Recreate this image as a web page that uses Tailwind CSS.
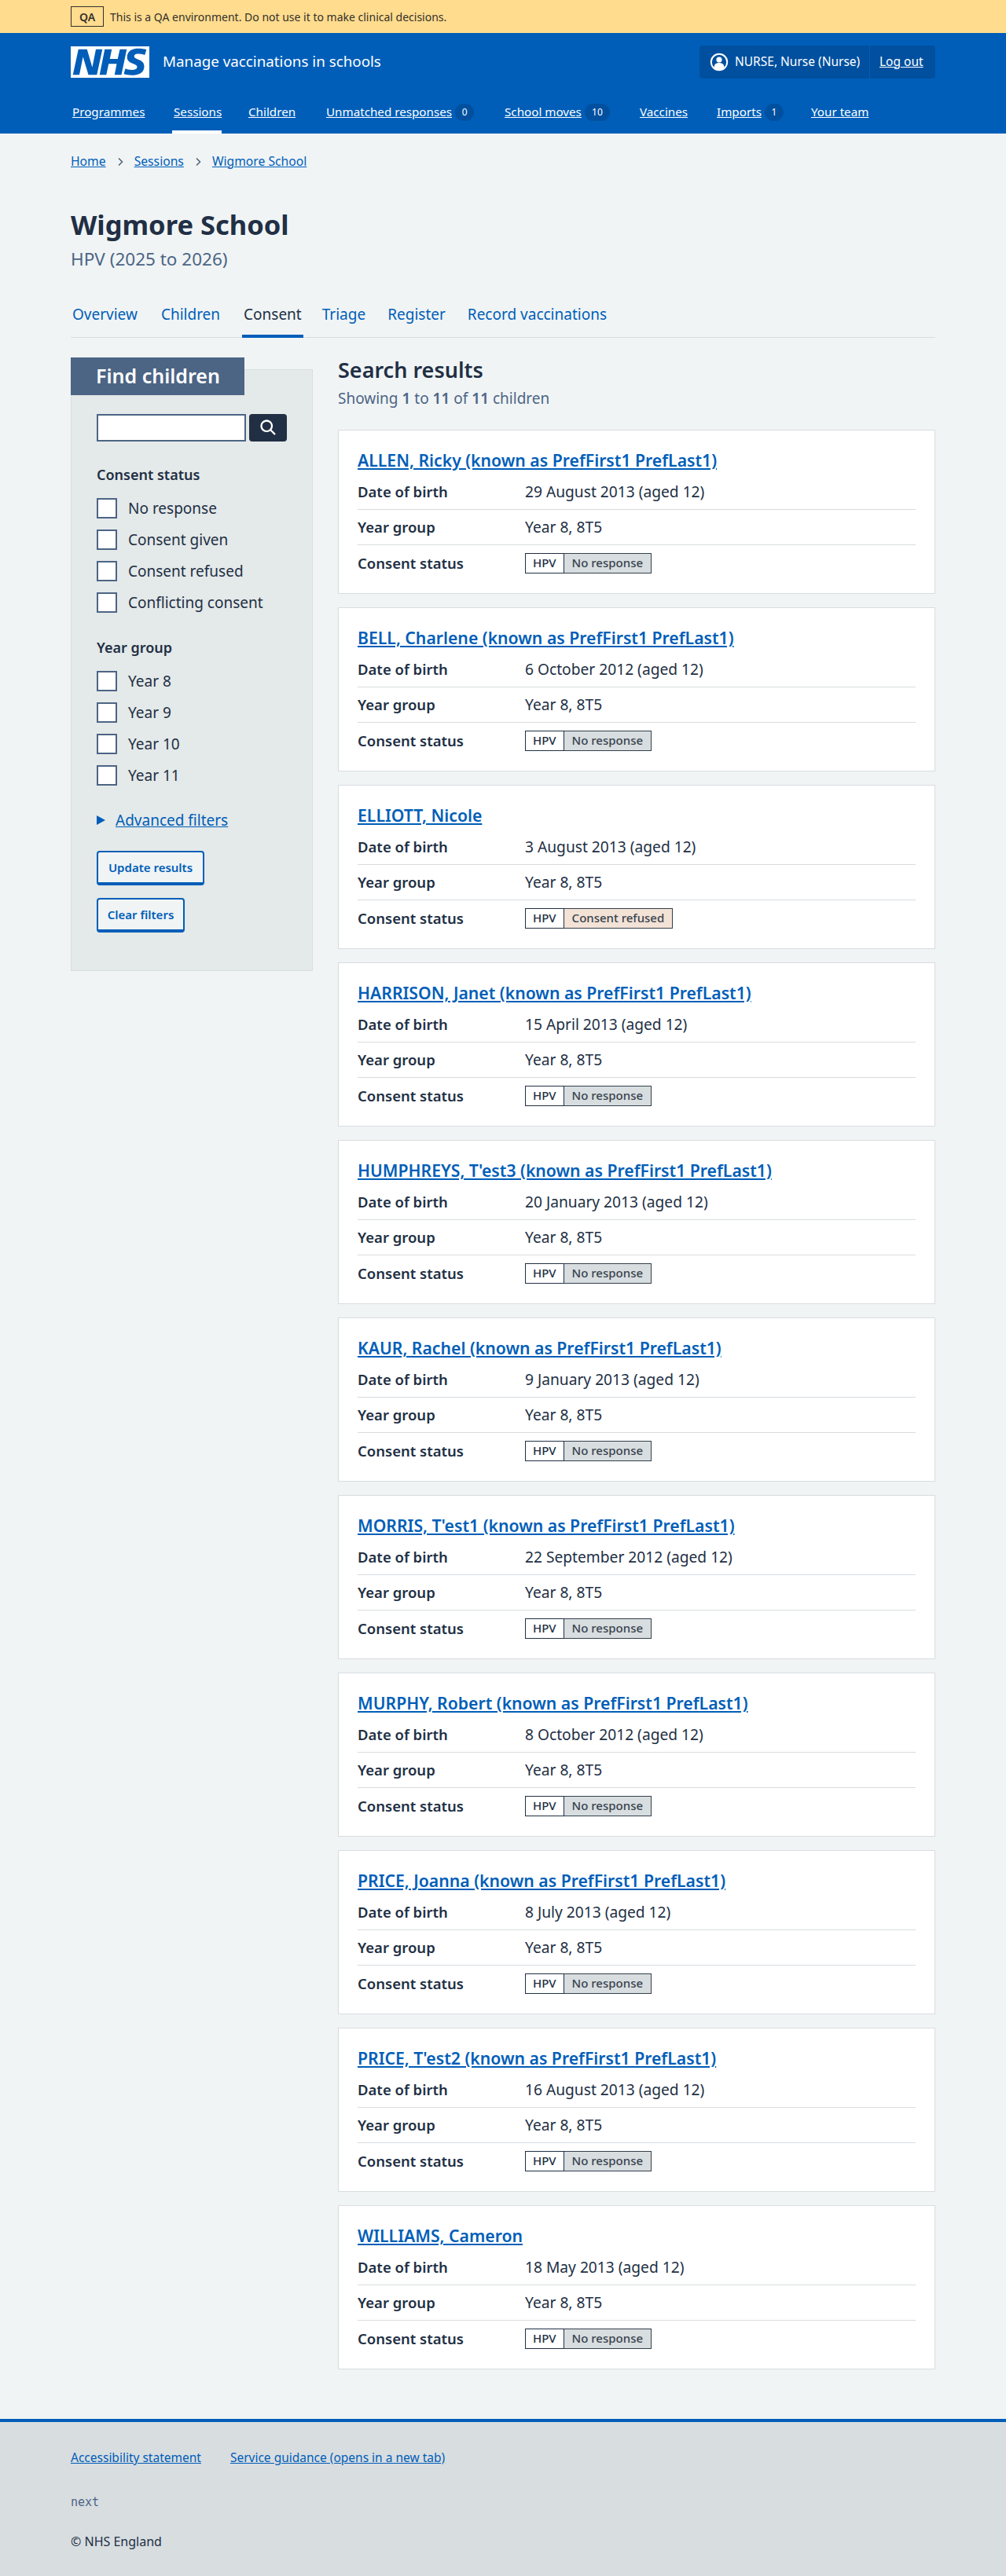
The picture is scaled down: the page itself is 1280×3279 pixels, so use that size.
<!DOCTYPE html>
<html lang="en">
	<head>
		<meta charset="UTF-8" />
		<meta name="viewport" content="width=device-width, initial-scale=1.0" />
		<script src="https://cdn.jsdelivr.net/npm/@tailwindcss/browser@4"></script>
		<title>Wigmore School – Consent</title>
	</head>
	<body class="bg-[#f0f4f5] text-[#212f44] font-['Noto_Sans',sans-serif] text-[16px] w-full">
		<!-- QA banner -->
		<div class="bg-[#ffdc8e] h-[42px] px-[90px] flex items-center gap-2 text-[14px] text-[#33302a]">
			<strong class="border border-[#33302a] h-[26px] w-[42px] flex items-center justify-center font-semibold">QA</strong>
			<span>This is a QA environment. Do not use it to make clinical decisions.</span>
		</div>

		<header class="bg-[#005eb8] h-[128px] text-white">
			<div class="px-[90px] flex items-center justify-between h-[70px] pt-[16px] pb-[13px]">
				<div class="flex items-center gap-[17px]">
					<svg class="w-[100px] h-[40px]" viewBox="0 0 40 16" preserveAspectRatio="none">
						<path fill="#fff" d="M0 0h40v16H0z" />
						<path fill="#005eb8" d="M3.9 1.5h4.4l2.6 9h.1l1.8-9h3.3l-2.8 13H9l-2.7-9h-.1l-1.8 9H1.1M17.3 1.5h3.6l-1 4.9h4L25 1.5h3.5l-2.7 13h-3.5l1.1-5.6h-4.1l-1.2 5.6h-3.4M37.7 4.4c-.7-.3-1.6-.6-2.9-.6-1.4 0-2.5.2-2.5 1.3 0 1.8 5.1 1.2 5.1 5.1 0 3.6-3.3 4.5-6.4 4.5-1.3 0-2.9-.3-4-.7l.8-2.7c.7.4 2.1.7 3.2.7s2.8-.2 2.8-1.5c0-2.1-5.1-1.3-5.1-5 0-3.4 2.9-4.4 5.8-4.4 1.6 0 3.1.2 4 .6" />
					</svg>
					<span class="text-[18.8px]">Manage vaccinations in schools</span>
				</div>
				<div class="bg-[#00509f] rounded h-[42px] w-[300px] flex items-center text-[15.500px]">
					<svg class="w-[24px] h-[24px] ml-[13px] mr-[8px]" viewBox="0 0 24 24">
						<circle cx="12" cy="12" r="10.2" fill="none" stroke="#fff" stroke-width="2" />
						<circle cx="12" cy="9" r="3.6" fill="#fff" />
						<path fill="#fff" d="M5.5 19c0-4 2.5-6 6.5-6s6.5 2 6.5 6c-1.5 2-4 3-6.500 3s-5-1-6.500-3z" />
					</svg>
					<span class="w-[171px]">NURSE, Nurse (Nurse)</span>
					<a href="#" class="border-l border-[#005eb8] h-full flex items-center pl-[12px] underline">Log out</a>
				</div>
			</div>
			<nav class="px-[90px] h-[58px] flex items-stretch text-[15.200px]">
				<a href="#" class="ml-[2px] w-[129px] pt-[19px] underline">Programmes</a>
				<a href="#" class="w-[63px] pt-[19px] pl-[2px] -ml-[2px] mr-[34px] underline border-b-4 border-white">Sessions</a>
				<a href="#" class="w-[99px] pt-[19px] underline">Children</a>
				<span class="w-[227px] pt-[19px]"><a href="#" class="underline">Unmatched responses</a><span class="inline-flex items-center justify-center w-[24px] h-[22px] rounded-full bg-[#00509f] text-[12px] ml-[4px] align-[1px]">0</span></span>
				<span class="w-[172px] pt-[19px]"><a href="#" class="underline">School moves</a><span class="inline-flex items-center justify-center w-[32px] h-[22px] rounded-full bg-[#00509f] text-[12px] ml-[4px] align-[1px]">10</span></span>
				<a href="#" class="w-[98px] pt-[19px] underline">Vaccines</a>
				<span class="w-[120px] pt-[19px]"><a href="#" class="underline">Imports</a><span class="inline-flex items-center justify-center w-[24px] h-[22px] rounded-full bg-[#00509f] text-[12px] ml-[4px] align-[1px]">1</span></span>
				<a href="#" class="pt-[19px] underline">Your team</a>
			</nav>
		</header>

		<main class="px-[90px]">
			<!-- Breadcrumb -->
			<div class="flex items-center h-[72px] text-[15.700px] text-[#005eb8] pb-[1px]">
				<a href="#" class="underline">Home</a>
				<svg class="w-[10px] h-[12px] mx-[13px] text-[#4c6272]" viewBox="0 0 10 12"><path d="M3 1.500 7.500 6 3 10.500" fill="none" stroke="currentColor" stroke-width="1.500" /></svg>
				<a href="#" class="underline">Sessions</a>
				<svg class="w-[10px] h-[12px] mx-[13px] text-[#4c6272]" viewBox="0 0 10 12"><path d="M3 1.500 7.500 6 3 10.500" fill="none" stroke="currentColor" stroke-width="1.500" /></svg>
				<a href="#" class="underline">Wigmore School</a>
			</div>

			<h1 class="text-[34.500px] leading-[44px] font-bold mt-[22px]">Wigmore School</h1>
			<p class="text-[22.500px] leading-[30px] text-[#4c6585] mt-[7px]">HPV (2025 to 2026)</p>

			<!-- Tabs -->
			<nav class="flex items-stretch h-[58px] mt-[27px] border-b border-[#d8dde0] text-[19px] text-[#005eb8]">
				<a href="#" class="px-[2px] mr-[26px] pt-[14px]">Overview</a>
				<a href="#" class="px-[2px] mr-[26px] pt-[14px]">Children</a>
				<span class="px-[2px] mr-[22px] pt-[14px] text-[#212f44] border-b-4 border-[#005eb8] -mb-px">Consent</span>
				<a href="#" class="px-[2px] mr-[24px] pt-[14px]">Triage</a>
				<a href="#" class="px-[2px] mr-[24px] pt-[14px]">Register</a>
				<a href="#" class="px-[2px] pt-[14px]">Record vaccinations</a>
			</nav>

			<div class="flex items-start gap-[32px] mt-[25px] pb-[63px]">
				<!-- Filters -->
				<aside class="w-[308px] shrink-0 relative pt-[15px]">
					<h2 class="absolute top-0 left-0 w-[221px] h-[48px] bg-[#4c6585] text-white text-[25px] font-semibold pl-[32px] flex items-center">Find children</h2>
					<form class="bg-[#e4e9e9] border border-[#d8dde0] h-[766px] pl-[32px] pt-[56px]">
						<div class="flex gap-[4px]">
							<input type="text" class="w-[190px] h-[35px] bg-white border-2 border-[#4c6585]" />
							<button type="button" class="w-[48px] h-[35px] bg-[#212f44] rounded flex items-center justify-center">
								<svg class="w-[27px] h-[27px]" viewBox="0 0 24 24"><path fill="#fff" d="M19.71 18.29l-4.11-4.1a7 7 0 1 0-1.41 1.41l4.1 4.11a1 1 0 0 0 1.42 0 1 1 0 0 0 0-1.42zM5 10a5 5 0 1 1 5 5 5 5 0 0 1-5-5z" /></svg>
							</button>
						</div>

						<h3 class="font-semibold text-[18px] leading-[24px] mt-[30px]">Consent status</h3>
						<div class="flex flex-col gap-[14px] mt-[18px] text-[19px] leading-[26px]">
							<label class="flex items-center gap-[14px]"><span class="w-[26px] h-[26px] bg-white border-2 border-[#4c6585]"></span>No response</label>
							<label class="flex items-center gap-[14px]"><span class="w-[26px] h-[26px] bg-white border-2 border-[#4c6585]"></span>Consent given</label>
							<label class="flex items-center gap-[14px]"><span class="w-[26px] h-[26px] bg-white border-2 border-[#4c6585]"></span>Consent refused</label>
							<label class="flex items-center gap-[14px]"><span class="w-[26px] h-[26px] bg-white border-2 border-[#4c6585]"></span>Conflicting consent</label>
						</div>

						<h3 class="font-semibold text-[18px] leading-[24px] mt-[32px]">Year group</h3>
						<div class="flex flex-col gap-[14px] mt-[18px] text-[19px] leading-[26px]">
							<label class="flex items-center gap-[14px]"><span class="w-[26px] h-[26px] bg-white border-2 border-[#4c6585]"></span>Year 8</label>
							<label class="flex items-center gap-[14px]"><span class="w-[26px] h-[26px] bg-white border-2 border-[#4c6585]"></span>Year 9</label>
							<label class="flex items-center gap-[14px]"><span class="w-[26px] h-[26px] bg-white border-2 border-[#4c6585]"></span>Year 10</label>
							<label class="flex items-center gap-[14px]"><span class="w-[26px] h-[26px] bg-white border-2 border-[#4c6585]"></span>Year 11</label>
						</div>

						<div class="flex items-center gap-[13px] mt-[32px] text-[19px] leading-[24px] text-[#005eb8]">
							<svg class="w-[11px] h-[12px]" viewBox="0 0 11 12"><path d="M0 0 11 6 0 12z" fill="#005eb8" /></svg>
							<a href="#" class="underline">Advanced filters</a>
						</div>

						<button type="button" class="block w-[137px] h-[44px] mt-[27px] rounded bg-[#f0f4f5] border-2 border-b-4 border-[#005eb8] text-[#005eb8] text-[15px] font-semibold">Update results</button>
						<button type="button" class="block w-[112px] h-[44px] mt-[16px] rounded bg-[#f0f4f5] border-2 border-b-4 border-[#005eb8] text-[#005eb8] text-[15px] font-semibold">Clear filters</button>
					</form>
				</aside>

				<!-- Results -->
				<section class="flex-1">
					<h2 class="text-[27px] leading-[32px] font-semibold">Search results</h2>
					<p class="text-[19px] leading-[28px] text-[#4c6585] mt-[6px]">Showing <b class="font-semibold">1</b> to <b class="font-semibold">11</b> of <b class="font-semibold">11</b> children</p>

					<div class="flex flex-col gap-[17px] mt-[26px]">
						<article class="bg-white border border-[#d8dde0] h-[209px] px-[24px] pt-[23px]">
							<h3 class="text-[21.200px] leading-[30px] font-semibold"><a href="#" class="text-[#005eb8] underline">ALLEN, Ricky (known as PrefFirst1 PrefLast1)</a></h3>
							<dl class="text-[19.200px] mt-[3px]">
								<div class="flex h-[45px] items-center border-b border-[#d8dde0]"><dt class="w-[213px] text-[18.500px] font-semibold">Date of birth</dt><dd>29 August 2013 (aged 12)</dd></div>
								<div class="flex h-[45px] items-center border-b border-[#d8dde0]"><dt class="w-[213px] text-[18.500px] font-semibold">Year group</dt><dd>Year 8, 8T5</dd></div>
								<div class="flex h-[45px] items-center"><dt class="w-[213px] text-[18.500px] font-semibold">Consent status</dt><dd class="flex h-[26px] text-[15px] font-medium"><span class="border border-[#212f44] px-[9px] flex items-center">HPV</span><span class="border border-l-0 border-[#33404b] bg-[#d8dde0] text-[#37434d] px-[10px] flex items-center">No response</span></dd></div>
							</dl>
						</article>
						<article class="bg-white border border-[#d8dde0] h-[209px] px-[24px] pt-[23px]">
							<h3 class="text-[21.200px] leading-[30px] font-semibold"><a href="#" class="text-[#005eb8] underline">BELL, Charlene (known as PrefFirst1 PrefLast1)</a></h3>
							<dl class="text-[19.200px] mt-[3px]">
								<div class="flex h-[45px] items-center border-b border-[#d8dde0]"><dt class="w-[213px] text-[18.500px] font-semibold">Date of birth</dt><dd>6 October 2012 (aged 12)</dd></div>
								<div class="flex h-[45px] items-center border-b border-[#d8dde0]"><dt class="w-[213px] text-[18.500px] font-semibold">Year group</dt><dd>Year 8, 8T5</dd></div>
								<div class="flex h-[45px] items-center"><dt class="w-[213px] text-[18.500px] font-semibold">Consent status</dt><dd class="flex h-[26px] text-[15px] font-medium"><span class="border border-[#212f44] px-[9px] flex items-center">HPV</span><span class="border border-l-0 border-[#33404b] bg-[#d8dde0] text-[#37434d] px-[10px] flex items-center">No response</span></dd></div>
							</dl>
						</article>
						<article class="bg-white border border-[#d8dde0] h-[209px] px-[24px] pt-[23px]">
							<h3 class="text-[21.200px] leading-[30px] font-semibold"><a href="#" class="text-[#005eb8] underline">ELLIOTT, Nicole</a></h3>
							<dl class="text-[19.200px] mt-[3px]">
								<div class="flex h-[45px] items-center border-b border-[#d8dde0]"><dt class="w-[213px] text-[18.500px] font-semibold">Date of birth</dt><dd>3 August 2013 (aged 12)</dd></div>
								<div class="flex h-[45px] items-center border-b border-[#d8dde0]"><dt class="w-[213px] text-[18.500px] font-semibold">Year group</dt><dd>Year 8, 8T5</dd></div>
								<div class="flex h-[45px] items-center"><dt class="w-[213px] text-[18.500px] font-semibold">Consent status</dt><dd class="flex h-[26px] text-[15px] font-medium"><span class="border border-[#212f44] px-[9px] flex items-center">HPV</span><span class="border border-l-0 border-[#33404b] bg-[#f3e2d6] text-[#37434d] px-[10px] flex items-center">Consent refused</span></dd></div>
							</dl>
						</article>
						<article class="bg-white border border-[#d8dde0] h-[209px] px-[24px] pt-[23px]">
							<h3 class="text-[21.200px] leading-[30px] font-semibold"><a href="#" class="text-[#005eb8] underline">HARRISON, Janet (known as PrefFirst1 PrefLast1)</a></h3>
							<dl class="text-[19.200px] mt-[3px]">
								<div class="flex h-[45px] items-center border-b border-[#d8dde0]"><dt class="w-[213px] text-[18.500px] font-semibold">Date of birth</dt><dd>15 April 2013 (aged 12)</dd></div>
								<div class="flex h-[45px] items-center border-b border-[#d8dde0]"><dt class="w-[213px] text-[18.500px] font-semibold">Year group</dt><dd>Year 8, 8T5</dd></div>
								<div class="flex h-[45px] items-center"><dt class="w-[213px] text-[18.500px] font-semibold">Consent status</dt><dd class="flex h-[26px] text-[15px] font-medium"><span class="border border-[#212f44] px-[9px] flex items-center">HPV</span><span class="border border-l-0 border-[#33404b] bg-[#d8dde0] text-[#37434d] px-[10px] flex items-center">No response</span></dd></div>
							</dl>
						</article>
						<article class="bg-white border border-[#d8dde0] h-[209px] px-[24px] pt-[23px]">
							<h3 class="text-[21.200px] leading-[30px] font-semibold"><a href="#" class="text-[#005eb8] underline">HUMPHREYS, T'est3 (known as PrefFirst1 PrefLast1)</a></h3>
							<dl class="text-[19.200px] mt-[3px]">
								<div class="flex h-[45px] items-center border-b border-[#d8dde0]"><dt class="w-[213px] text-[18.500px] font-semibold">Date of birth</dt><dd>20 January 2013 (aged 12)</dd></div>
								<div class="flex h-[45px] items-center border-b border-[#d8dde0]"><dt class="w-[213px] text-[18.500px] font-semibold">Year group</dt><dd>Year 8, 8T5</dd></div>
								<div class="flex h-[45px] items-center"><dt class="w-[213px] text-[18.500px] font-semibold">Consent status</dt><dd class="flex h-[26px] text-[15px] font-medium"><span class="border border-[#212f44] px-[9px] flex items-center">HPV</span><span class="border border-l-0 border-[#33404b] bg-[#d8dde0] text-[#37434d] px-[10px] flex items-center">No response</span></dd></div>
							</dl>
						</article>
						<article class="bg-white border border-[#d8dde0] h-[209px] px-[24px] pt-[23px]">
							<h3 class="text-[21.200px] leading-[30px] font-semibold"><a href="#" class="text-[#005eb8] underline">KAUR, Rachel (known as PrefFirst1 PrefLast1)</a></h3>
							<dl class="text-[19.200px] mt-[3px]">
								<div class="flex h-[45px] items-center border-b border-[#d8dde0]"><dt class="w-[213px] text-[18.500px] font-semibold">Date of birth</dt><dd>9 January 2013 (aged 12)</dd></div>
								<div class="flex h-[45px] items-center border-b border-[#d8dde0]"><dt class="w-[213px] text-[18.500px] font-semibold">Year group</dt><dd>Year 8, 8T5</dd></div>
								<div class="flex h-[45px] items-center"><dt class="w-[213px] text-[18.500px] font-semibold">Consent status</dt><dd class="flex h-[26px] text-[15px] font-medium"><span class="border border-[#212f44] px-[9px] flex items-center">HPV</span><span class="border border-l-0 border-[#33404b] bg-[#d8dde0] text-[#37434d] px-[10px] flex items-center">No response</span></dd></div>
							</dl>
						</article>
						<article class="bg-white border border-[#d8dde0] h-[209px] px-[24px] pt-[23px]">
							<h3 class="text-[21.200px] leading-[30px] font-semibold"><a href="#" class="text-[#005eb8] underline">MORRIS, T'est1 (known as PrefFirst1 PrefLast1)</a></h3>
							<dl class="text-[19.200px] mt-[3px]">
								<div class="flex h-[45px] items-center border-b border-[#d8dde0]"><dt class="w-[213px] text-[18.500px] font-semibold">Date of birth</dt><dd>22 September 2012 (aged 12)</dd></div>
								<div class="flex h-[45px] items-center border-b border-[#d8dde0]"><dt class="w-[213px] text-[18.500px] font-semibold">Year group</dt><dd>Year 8, 8T5</dd></div>
								<div class="flex h-[45px] items-center"><dt class="w-[213px] text-[18.500px] font-semibold">Consent status</dt><dd class="flex h-[26px] text-[15px] font-medium"><span class="border border-[#212f44] px-[9px] flex items-center">HPV</span><span class="border border-l-0 border-[#33404b] bg-[#d8dde0] text-[#37434d] px-[10px] flex items-center">No response</span></dd></div>
							</dl>
						</article>
						<article class="bg-white border border-[#d8dde0] h-[209px] px-[24px] pt-[23px]">
							<h3 class="text-[21.200px] leading-[30px] font-semibold"><a href="#" class="text-[#005eb8] underline">MURPHY, Robert (known as PrefFirst1 PrefLast1)</a></h3>
							<dl class="text-[19.200px] mt-[3px]">
								<div class="flex h-[45px] items-center border-b border-[#d8dde0]"><dt class="w-[213px] text-[18.500px] font-semibold">Date of birth</dt><dd>8 October 2012 (aged 12)</dd></div>
								<div class="flex h-[45px] items-center border-b border-[#d8dde0]"><dt class="w-[213px] text-[18.500px] font-semibold">Year group</dt><dd>Year 8, 8T5</dd></div>
								<div class="flex h-[45px] items-center"><dt class="w-[213px] text-[18.500px] font-semibold">Consent status</dt><dd class="flex h-[26px] text-[15px] font-medium"><span class="border border-[#212f44] px-[9px] flex items-center">HPV</span><span class="border border-l-0 border-[#33404b] bg-[#d8dde0] text-[#37434d] px-[10px] flex items-center">No response</span></dd></div>
							</dl>
						</article>
						<article class="bg-white border border-[#d8dde0] h-[209px] px-[24px] pt-[23px]">
							<h3 class="text-[21.200px] leading-[30px] font-semibold"><a href="#" class="text-[#005eb8] underline">PRICE, Joanna (known as PrefFirst1 PrefLast1)</a></h3>
							<dl class="text-[19.200px] mt-[3px]">
								<div class="flex h-[45px] items-center border-b border-[#d8dde0]"><dt class="w-[213px] text-[18.500px] font-semibold">Date of birth</dt><dd>8 July 2013 (aged 12)</dd></div>
								<div class="flex h-[45px] items-center border-b border-[#d8dde0]"><dt class="w-[213px] text-[18.500px] font-semibold">Year group</dt><dd>Year 8, 8T5</dd></div>
								<div class="flex h-[45px] items-center"><dt class="w-[213px] text-[18.500px] font-semibold">Consent status</dt><dd class="flex h-[26px] text-[15px] font-medium"><span class="border border-[#212f44] px-[9px] flex items-center">HPV</span><span class="border border-l-0 border-[#33404b] bg-[#d8dde0] text-[#37434d] px-[10px] flex items-center">No response</span></dd></div>
							</dl>
						</article>
						<article class="bg-white border border-[#d8dde0] h-[209px] px-[24px] pt-[23px]">
							<h3 class="text-[21.200px] leading-[30px] font-semibold"><a href="#" class="text-[#005eb8] underline">PRICE, T'est2 (known as PrefFirst1 PrefLast1)</a></h3>
							<dl class="text-[19.200px] mt-[3px]">
								<div class="flex h-[45px] items-center border-b border-[#d8dde0]"><dt class="w-[213px] text-[18.500px] font-semibold">Date of birth</dt><dd>16 August 2013 (aged 12)</dd></div>
								<div class="flex h-[45px] items-center border-b border-[#d8dde0]"><dt class="w-[213px] text-[18.500px] font-semibold">Year group</dt><dd>Year 8, 8T5</dd></div>
								<div class="flex h-[45px] items-center"><dt class="w-[213px] text-[18.500px] font-semibold">Consent status</dt><dd class="flex h-[26px] text-[15px] font-medium"><span class="border border-[#212f44] px-[9px] flex items-center">HPV</span><span class="border border-l-0 border-[#33404b] bg-[#d8dde0] text-[#37434d] px-[10px] flex items-center">No response</span></dd></div>
							</dl>
						</article>
						<article class="bg-white border border-[#d8dde0] h-[209px] px-[24px] pt-[23px]">
							<h3 class="text-[21.200px] leading-[30px] font-semibold"><a href="#" class="text-[#005eb8] underline">WILLIAMS, Cameron</a></h3>
							<dl class="text-[19.200px] mt-[3px]">
								<div class="flex h-[45px] items-center border-b border-[#d8dde0]"><dt class="w-[213px] text-[18.500px] font-semibold">Date of birth</dt><dd>18 May 2013 (aged 12)</dd></div>
								<div class="flex h-[45px] items-center border-b border-[#d8dde0]"><dt class="w-[213px] text-[18.500px] font-semibold">Year group</dt><dd>Year 8, 8T5</dd></div>
								<div class="flex h-[45px] items-center"><dt class="w-[213px] text-[18.500px] font-semibold">Consent status</dt><dd class="flex h-[26px] text-[15px] font-medium"><span class="border border-[#212f44] px-[9px] flex items-center">HPV</span><span class="border border-l-0 border-[#33404b] bg-[#d8dde0] text-[#37434d] px-[10px] flex items-center">No response</span></dd></div>
							</dl>
						</article>
					</div>
				</section>
			</div>
		</main>

		<footer class="bg-[#d8dde0] border-t-4 border-[#005eb8] px-[90px] h-[200px] text-[16px]">
			<div class="flex gap-[37px] text-[15.500px] text-[#005eb8] pt-[35px] leading-[20px]">
				<a href="#" class="underline">Accessibility statement</a>
				<a href="#" class="underline">Service guidance (opens in a new tab)</a>
			</div>
			<p class="font-['DejaVu_Sans_Mono',monospace] text-[15px] leading-[20px] text-[#4c6585] mt-[37px]">next</p>
			<p class="leading-[20px] mt-[30px]">© NHS England</p>
		</footer>
	</body>
</html>
